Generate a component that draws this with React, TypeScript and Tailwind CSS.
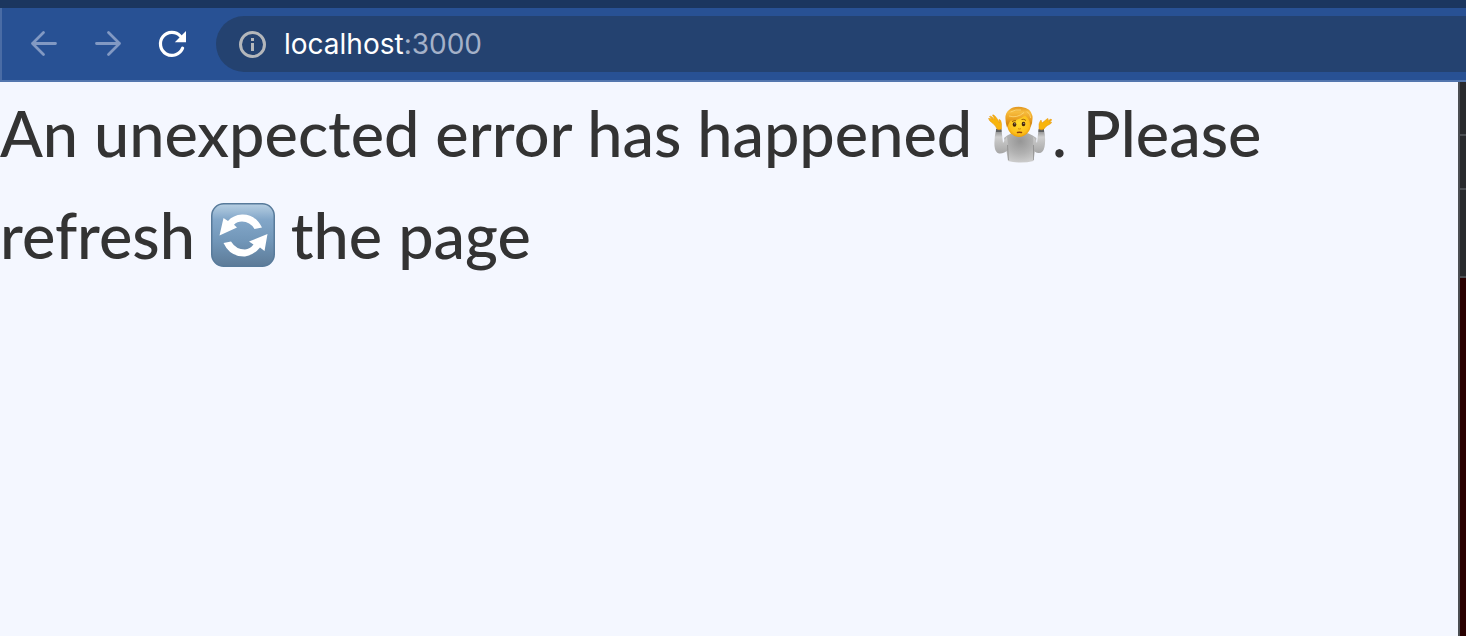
import React from "react";

function BackIcon() {
  return (
    <svg viewBox="0 0 32 32" className="size-8" fill="none" stroke="currentColor" strokeWidth="2.8" strokeLinecap="round" aria-hidden="true">
      <path d="M27.500 15.500H4.500M15.500 4.500 4.500 15.500l11 11" strokeLinejoin="round" />
    </svg>
  );
}

function ForwardIcon() {
  return (
    <svg viewBox="0 0 32 32" className="size-8" fill="none" stroke="currentColor" strokeWidth="2.8" strokeLinecap="round" aria-hidden="true">
      <path d="M4.500 15.500h23M16.500 4.500l11 11-11 11" strokeLinejoin="round" />
    </svg>
  );
}

function ReloadIcon() {
  return (
    <svg viewBox="0 0 32 32" className="size-8" fill="none" aria-hidden="true">
      <path d="M26.600 20.200A11.500 11.500 0 1 1 24.500 8.200" stroke="currentColor" strokeWidth="3.200" strokeLinecap="round" />
      <path d="M30 3v11.200H18.800z" fill="currentColor" />
    </svg>
  );
}

function InfoIcon() {
  return (
    <svg viewBox="0 0 28 28" className="size-7 shrink-0 overflow-visible text-[#b4b7bb]" fill="none" aria-hidden="true">
      <circle cx="12.500" cy="14.500" r="12" stroke="currentColor" strokeWidth="3" />
      <path d="M11 8h3v3h-3zM11 13h3v8h-3z" fill="currentColor" />
    </svg>
  );
}

function ShrugEmoji() {
  return (
    <svg viewBox="1 -1 64 60" className="inline-block h-[60px] w-16 align-[-8px]" role="img" aria-label="person shrugging">
      <defs>
        <radialGradient id="shirt" cx="0.5" cy="0.3" r="0.7">
          <stop offset="0" stopColor="#969696" />
          <stop offset="0.6" stopColor="#b2b2b2" />
          <stop offset="1" stopColor="#cbcbcb" />
        </radialGradient>
        <linearGradient id="sleeve" x1="0" y1="0" x2="0" y2="1">
          <stop offset="0" stopColor="#858585" />
          <stop offset="0.3" stopColor="#cecece" />
          <stop offset="1" stopColor="#a6a6a6" />
        </linearGradient>
        <radialGradient id="face" cx="0.5" cy="0.45" r="0.65">
          <stop offset="0" stopColor="#ffdc2e" />
          <stop offset="0.65" stopColor="#fdc01c" />
          <stop offset="1" stopColor="#e08600" />
        </radialGradient>
        <linearGradient id="hair" x1="0" y1="0" x2="0" y2="1">
          <stop offset="0" stopColor="#e0941e" />
          <stop offset="0.25" stopColor="#f7bd3f" />
          <stop offset="0.55" stopColor="#eca324" />
          <stop offset="1" stopColor="#c77507" />
        </linearGradient>
      </defs>
      <path d="M17 32Q24 26 33 26Q42 26 49.500 32L48.500 42 46.500 55Q34 58 21 55L19 42Z" fill="url(#shirt)" />
      <path d="M9 24h5.500l1.500 13 4-6.500 1.500 13Q17 48 12 47.500Q8 46.500 7.500 40Q7 32 9 24ZM51.500 24H57Q59 33 57.500 41Q56 47.500 51.500 47Q48 47 46 43L46.500 30.500 50 37Z" fill="url(#sleeve)" />
      <path d="M20.500 39 21.500 54M46.500 39 46.500 54" stroke="#777" strokeWidth="0.8" opacity="0.65" />
      <path d="M9 24.500h5.500M51.500 24.500H57" stroke="#5e6062" strokeWidth="3" />
      <path d="M10 23Q9 20 6 17.500Q2 15 1.500 12.500Q2 11.500 5.500 13.500L2.500 10.500Q3.500 9 8 13.500L5.500 9Q7 8 11 14L12.500 17L12 13.500Q14 13 14.500 18L14.500 23Q12 24.500 10 23ZM52 23L52 18Q53 15 54 14L55 17L60.500 12.500Q62 12 60.500 15L64 13Q66 14 62 16.500L64.500 16Q65 17.500 60.500 19.500Q58 21 57 23Q54.500 24.500 52 23Z" fill="#f8b50d" stroke="#e5930b" strokeWidth="0.5" />
      <ellipse cx="32" cy="18.500" rx="11.800" ry="12.500" fill="url(#face)" />
      <path d="M20 21.500Q16 8 22 4Q26.500 0 34.500 1Q44 2 45.500 10Q46 16 43.500 21.500L43 17Q42 12 38 9.500Q31.500 15 23.500 14.500L21.500 18Z" fill="url(#hair)" />
      <path d="M22 10Q30 12.500 37 6.500M23.500 6Q29 3 34 4M40 5.500Q43.500 8 43.700 12" fill="none" stroke="#ffe48b" strokeWidth="1" opacity="0.65" />
      <ellipse cx="27.500" cy="18.500" rx="1.800" ry="2.200" fill="#47280b" />
      <ellipse cx="36.500" cy="18" rx="1.800" ry="2.200" fill="#47280b" />
      <circle cx="27.900" cy="17.700" r="0.500" fill="#fff" />
      <circle cx="36.900" cy="17.200" r="0.500" fill="#fff" />
      <path d="M25 15.700Q27 14.200 29 14.700M34.500 13.500Q37 12.500 39 14.500" fill="none" stroke="#a76708" strokeWidth="1" />
      <path d="M31 22.700Q32.500 23.400 34 22.700" fill="none" stroke="#d58b0a" strokeWidth="1" />
      <path d="M30.500 26.500Q32.500 26.200 34.500 26.500" fill="none" stroke="#8b3f0b" strokeWidth="1.500" strokeLinecap="round" />
    </svg>
  );
}

function RefreshEmoji() {
  return (
    <svg viewBox="0 0 64 64" className="inline-block size-16 align-[-8px]" role="img" aria-label="refresh">
      <defs>
        <linearGradient id="tile" x1="0" y1="0" x2="0" y2="1">
          <stop offset="0" stopColor="#b8d0e3" />
          <stop offset="0.25" stopColor="#83a7c9" />
          <stop offset="0.6" stopColor="#7196b8" />
          <stop offset="1" stopColor="#5d7b98" />
        </linearGradient>
      </defs>
      <rect x="0.750" y="0.750" width="62.500" height="62.500" rx="12" fill="url(#tile)" stroke="#587b9b" strokeWidth="1.500" />
      <g fill="#fff">
        <path d="M8.500 32.500 12.500 15 17 18Q22 12 31 11.500Q44 11 51 24.500L43.500 26Q39 18.500 31 18.500Q26 18.500 23 21.700L26 24.500Z" />
        <path d="M56.500 31 53.500 48 49 44.500Q43 52 34 53.500Q19 54 12.500 40L20 38.500Q25 46.500 34 46.500Q39 46 42.500 41.500L38 38.500Z" />
      </g>
    </svg>
  );
}

export default function App() {
  return (
    <div className="flex min-h-screen flex-col bg-[#f4f7ff]">
      <header className="border-t-8 border-b-2 border-t-[#1b365f] border-b-[#5376ae] bg-[#285194]">
        <nav aria-label="Browser" className="flex items-center border-l-2 border-[#4a6ca5] py-2 pl-[26px]">
          <div className="flex gap-8 text-[#8299c3]">
            <button type="button" aria-label="Back"><BackIcon /></button>
            <button type="button" aria-label="Forward"><ForwardIcon /></button>
            <button type="button" aria-label="Reload" className="text-white"><ReloadIcon /></button>
          </div>
          <button
            type="button"
            aria-label="Address localhost:3000"
            className="ml-7 flex h-14 flex-1 items-center gap-4 rounded-l-full bg-[#244270] pl-6 text-left font-['Inter',sans-serif] text-[28px] leading-8 text-[#a4b1c8]"
          >
            <InfoIcon />
            <span><span className="text-white">localhost</span>:3000</span>
          </button>
        </nav>
      </header>
      <div className="flex flex-1">
        <main className="min-w-0 flex-1">
          <p className="pr-40 font-['Lato',sans-serif] text-[63px] leading-[102px] font-medium text-[#333333]">
            An unexpected error has happened <ShrugEmoji />. Please{" "}
            {"refresh "}<RefreshEmoji /> the page
          </p>
        </main>
        <aside aria-label="Developer tools" className="flex w-2 flex-col border-l-2 border-[#4b4e52] bg-[#290000]">
          <div className="h-[54px] border-b-2 border-[#4b4e52] bg-[#292a2d]" />
          <div className="h-[54px] border-b-2 border-[#4b4e52] bg-[#292a2d]" />
          <div className="h-22 border-b-2 border-[#4b4e52] bg-[#292a2d]" />
        </aside>
      </div>
    </div>
  );
}
